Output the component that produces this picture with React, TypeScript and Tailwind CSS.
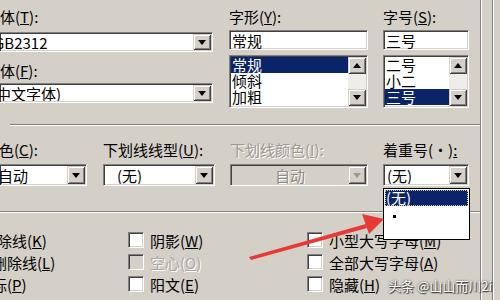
import React from "react";

const sunken =
  "border border-t-[#808080] border-l-[#808080] border-b-white border-r-white shadow-[inset_1px_1px_0_#404040,inset_-1px_-1px_0_#d4d0c8]";
const raised =
  "bg-[#d4d0c8] shadow-[inset_1px_1px_0_#d4d0c8,inset_-1px_-1px_0_#404040,inset_2px_2px_0_#ffffff,inset_-2px_-2px_0_#808080]";

function Tri({ up = false, grey = false }: { up?: boolean; grey?: boolean }) {
  return (
    <svg width="8" height="5" viewBox="0 0 8 5">
      <polygon
        points={up ? "0,5 8,5 4,0" : "0,0 8,0 4,5"}
        fill={grey ? "#9a978f" : "#000"}
      />
    </svg>
  );
}

function Btn({ up, grey, className = "" }: { up?: boolean; grey?: boolean; className?: string }) {
  return (
    <div className={`${raised} flex items-center justify-center w-[18px] ${className}`}>
      <Tri up={up} grey={grey} />
    </div>
  );
}

function Combo({
  text,
  className = "",
  textClass = "",
  disabled = false,
}: {
  text: string;
  className?: string;
  textClass?: string;
  disabled?: boolean;
}) {
  return (
    <div
      className={`${sunken} ${disabled ? "bg-[#d4d0c8]" : "bg-white"} flex items-stretch p-[1px] ${className}`}
    >
      <div
        className={`flex-1 flex items-center overflow-hidden whitespace-nowrap ${
          disabled ? "text-[#8c8a84] [text-shadow:1px_1px_0_#fff] justify-center" : ""
        } ${textClass}`}
      >
        {text}
      </div>
      <Btn grey={disabled} />
    </div>
  );
}

function ListBox({ rows, selected, className = "" }: { rows: string[]; selected: number; className?: string }) {
  return (
    <div className={`${sunken} bg-white flex p-[1px] ${className}`}>
      <div className="flex-1 flex flex-col overflow-hidden">
        {rows.map((r, i) => (
          <div
            key={r}
            className={`h-[16px] leading-[16px] overflow-hidden pl-[1px] whitespace-nowrap ${
              i === selected ? "bg-[#0a246a] text-white" : ""
            }`}
          >
            {r}
          </div>
        ))}
      </div>
      <div className="w-[18px] flex flex-col bg-[#eeede9]">
        <Btn up className="h-[17px]" />
        <div className="flex-1" />
        <Btn className="h-[17px]" />
      </div>
    </div>
  );
}

function Check({ label, disabled = false }: { label: React.ReactNode; disabled?: boolean }) {
  return (
    <div className="flex items-center h-[22px] gap-[6px]">
      <div className={`${sunken} w-[16px] h-[16px] ${disabled ? "bg-[#d4d0c8]" : "bg-white"}`} />
      <div
        className={`whitespace-nowrap ${disabled ? "text-[#aaa79f] [text-shadow:1px_1px_0_#fff]" : ""}`}
      >
        {label}
      </div>
    </div>
  );
}

function Etch({ className = "" }: { className?: string }) {
  return <div className={`h-[2px] border-t border-t-[#808080] border-b border-b-white ${className}`} />;
}

export default function App() {
  return (
    <div className="w-[500px] h-[300px] bg-[#d4d0c8] overflow-hidden relative flex font-['Noto_Sans_CJK_SC',sans-serif] text-[15px] leading-[17px] text-black">
      <div className="w-[480px] flex flex-col">
        {/* fonts */}
        <div className="flex h-[112px]">
          <div className="w-[213px] flex flex-col pt-[8px]">
            <div className="whitespace-nowrap">
              体(<u>T</u>):
            </div>
            <Combo text="GB2312" className="mt-[7px] h-[20px] border-l-0" textClass="ml-[-7px]" />
            <div className="mt-[10px] whitespace-nowrap">
              体(<u>F</u>):
            </div>
            <Combo text="中文字体)" className="mt-[4px] h-[20px] border-l-0" textClass="ml-[-5px]" />
          </div>
          <div className="w-[139px] ml-[16px] flex flex-col pt-[8px]">
            <div className="whitespace-nowrap">
              字形(<u>Y</u>):
            </div>
            <div className={`${sunken} bg-white h-[20px] mt-[5px] pl-[2px] flex items-center`}>常规</div>
            <ListBox rows={["常规", "倾斜", "加粗"]} selected={0} className="mt-[5px] h-[53px]" />
          </div>
          <div className="w-[86px] ml-[15px] flex flex-col pt-[8px]">
            <div className="whitespace-nowrap">
              字号(<u>S</u>):
            </div>
            <div className={`${sunken} bg-white h-[20px] mt-[5px] pl-[2px] flex items-center`}>三号</div>
            <ListBox rows={["二号", "小二", "三号"]} selected={2} className="mt-[5px] h-[53px]" />
          </div>
        </div>

        <Etch className="mt-[12px] ml-[10px]" />

        {/* colours */}
        <div className="flex mt-[15px]">
          <div className="w-[87px] flex flex-col">
            <div className="whitespace-nowrap ml-[-1px]">
              色(<u>C</u>):
            </div>
            <Combo text="自动" className="mt-[6px] h-[22px] border-l-0" textClass="ml-[-3px]" />
          </div>
          <div className="w-[112px] ml-[16px] flex flex-col">
            <div className="whitespace-nowrap">
              下划线线型(<u>U</u>):
            </div>
            <Combo text="(无)" className="mt-[6px] h-[22px]" textClass="pl-[12px]" />
          </div>
          <div className="w-[138px] ml-[15px] flex flex-col">
            <div className="whitespace-nowrap text-[#9c998f] [text-shadow:1px_1px_0_#fff]">
              下划线颜色(<u>I</u>):
            </div>
            <Combo text="自动" disabled className="mt-[6px] h-[22px]" />
          </div>
          <div className="w-[86px] ml-[15px] flex flex-col">
            <div className="whitespace-nowrap">
              着重号(·)<u>:</u>
            </div>
            <Combo text="(无)" className="mt-[6px] h-[22px]" textClass="pl-[2px]" />
          </div>
        </div>

        <Etch className="mt-[25px]" />

        {/* effects */}
        <div className="flex mt-[16px]">
          <div className="w-[128px] flex flex-col overflow-hidden">
            <div className="h-[22px] flex items-center whitespace-nowrap ml-[-3px]">
              除线(<u>K</u>)
            </div>
            <div className="h-[22px] flex items-center whitespace-nowrap ml-[-8px]">
              删除线(<u>L</u>)
            </div>
            <div className="h-[22px] flex items-center whitespace-nowrap ml-[-8px]">
              标(<u>P</u>)
            </div>
          </div>
          <div className="w-[179px] flex flex-col">
            <Check label={<>阴影(<u>W</u>)</>} />
            <Check label={<>空心(<u>O</u>)</>} disabled />
            <Check label={<>阳文(<u>E</u>)</>} />
          </div>
          <div className="flex flex-col">
            <Check label={<>小型大写字母(<u>M</u>)</>} />
            <Check label={<>全部大写字母(<u>A</u>)</>} />
            <Check label={<>隐藏(<u>H</u>)</>} />
          </div>
        </div>
      </div>

      {/* right edge of the dialog */}
      <div className="w-[20px] flex">
        <div className="w-[1px] bg-[#808080]" />
        <div className="w-[1px] bg-white" />
        <div className="w-[10px]" />
        <div className="w-[1px] bg-[#808080]" />
        <div className="w-[1px] bg-white" />
      </div>

      {/* open dropdown list */}
      <div className="absolute left-[383px] top-[188px] w-[87px] h-[52px] bg-white border border-black p-[1px]">
        <div className="h-[16px] leading-[16px] bg-[#0a246a] text-white pl-[1px] outline outline-1 outline-dotted outline-[#c8c4b0] -outline-offset-1">
          (无)
        </div>
        <div className="relative h-[16px]">
          <div className="absolute left-[8px] top-[9px] w-[3px] h-[3px] bg-black" />
        </div>
      </div>

      {/* red arrow */}
      <svg className="absolute left-0 top-0" width="500" height="300" viewBox="0 0 500 300">
        <polygon points="249,257 366,224 367,228 251,260" fill="#e83a35" />
        <polygon points="384,219 362,214 369,234" fill="#e83a35" />
      </svg>

      {/* watermark */}
      <div className="absolute left-[388px] top-[278px] text-[13px] leading-[15px] text-white whitespace-nowrap [text-shadow:0_0_2px_#333,1px_1px_1px_#333]">
        头条 @山山而川2i
      </div>
    </div>
  );
}
